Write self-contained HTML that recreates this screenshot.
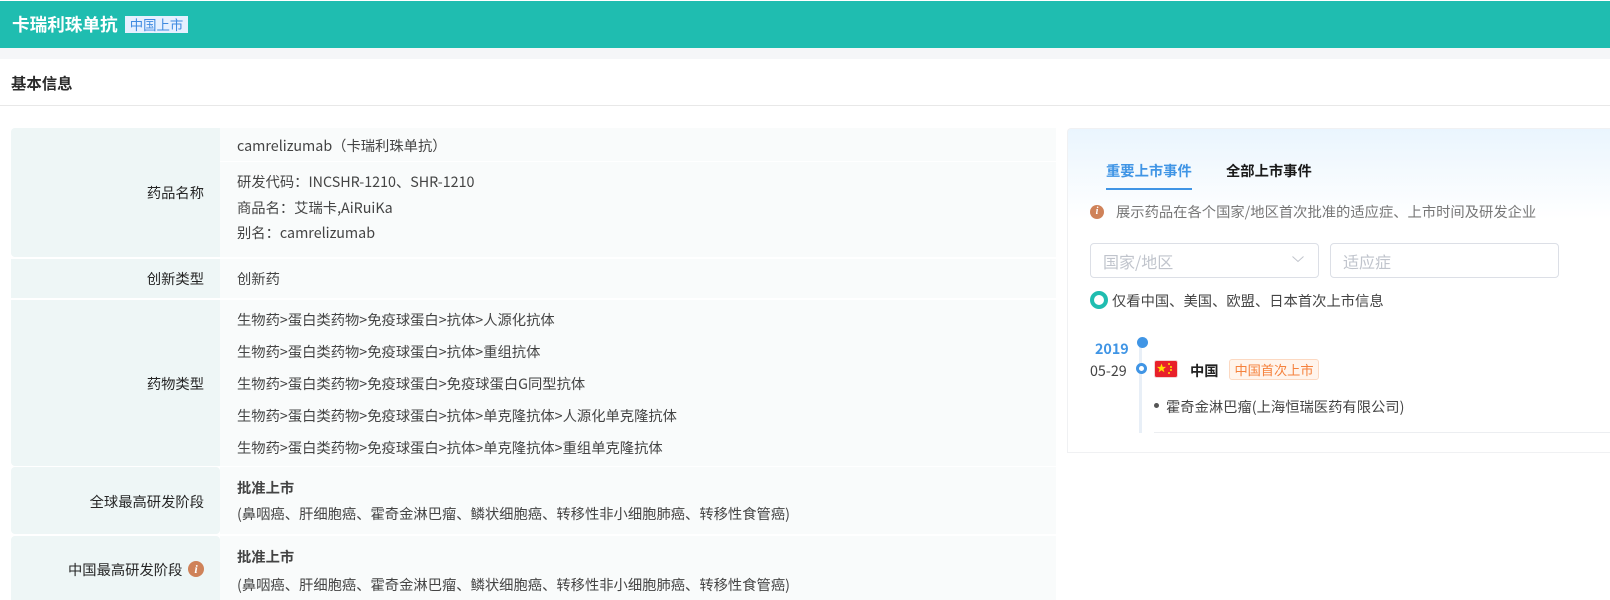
<!DOCTYPE html>
<html lang="zh"><head><meta charset="utf-8"><style>
html,body{margin:0;padding:0;background:#fff}
body{width:1610px;height:600px;overflow:hidden;position:relative;font-family:"Liberation Sans","Noto Sans CJK SC",sans-serif;font-size:14.3px;color:#444}
div{position:absolute;box-sizing:border-box}
.t{white-space:nowrap;line-height:20px;font-family:"Noto Sans CJK SC",sans-serif}
.l{background:#eef6f6;left:11px;width:209px}
.v{background:#f9fbfb;left:220px;width:836px}
.lb{right:1406px;color:#262626;text-align:right}
.x{left:237px}
</style></head><body>
<div style="left:0;top:1px;width:1610px;height:47px;background:#1fbdb0"></div>
<div style="left:0;top:48px;width:1610px;height:11px;background:#f5f6f8"></div>
<div class="t" style="left:12px;top:14px;font-size:17.6px;line-height:22px;font-weight:700;color:#fff">卡瑞利珠单抗</div>
<div class="t" style="left:125px;top:16px;width:63px;height:17px;background:#e6f0ff;color:#3f8ae0;font-size:13.4px;line-height:17px;text-align:center">中国上市</div>
<div class="t" style="left:11px;top:73px;font-size:15.4px;font-weight:700;color:#2b2b2b">基本信息</div>
<div style="left:0;top:105px;width:1610px;height:1px;background:#e8e8e8"></div>

<div class="l" style="top:128px;height:129px;border-radius:4px 0 0 4px"></div>
<div class="v" style="top:128px;height:33px"></div>
<div class="v" style="top:162px;height:95px"></div>
<div class="l" style="top:259px;height:39px"></div><div class="v" style="top:259px;height:39px"></div>
<div class="l" style="top:300px;height:166px;border-radius:0 0 0 4px"></div><div class="v" style="top:300px;height:166px"></div>
<div class="l" style="top:467px;height:67px;border-radius:4px"></div><div class="v" style="top:467px;height:67px"></div>
<div class="l" style="top:536px;height:64px;border-radius:4px 4px 0 0"></div><div class="v" style="top:536px;height:64px"></div>

<div class="t lb" style="top:183px">药品名称</div>
<div class="t x" style="top:136px">camrelizumab（卡瑞利珠单抗）</div>
<div class="t x" style="top:172px">研发代码：INCSHR-1210、SHR-1210</div>
<div class="t x" style="top:198px">商品名：艾瑞卡,AiRuiKa</div>
<div class="t x" style="top:223px">别名：camrelizumab</div>
<div class="t lb" style="top:269px">创新类型</div>
<div class="t x" style="top:269px">创新药</div>
<div class="t lb" style="top:374px">药物类型</div>
<div class="t x" style="top:310px">生物药&gt;蛋白类药物&gt;免疫球蛋白&gt;抗体&gt;人源化抗体</div>
<div class="t x" style="top:342px">生物药&gt;蛋白类药物&gt;免疫球蛋白&gt;抗体&gt;重组抗体</div>
<div class="t x" style="top:374px">生物药&gt;蛋白类药物&gt;免疫球蛋白&gt;免疫球蛋白G同型抗体</div>
<div class="t x" style="top:406px">生物药&gt;蛋白类药物&gt;免疫球蛋白&gt;抗体&gt;单克隆抗体&gt;人源化单克隆抗体</div>
<div class="t x" style="top:438px">生物药&gt;蛋白类药物&gt;免疫球蛋白&gt;抗体&gt;单克隆抗体&gt;重组单克隆抗体</div>
<div class="t lb" style="top:492px">全球最高研发阶段</div>
<div class="t x" style="top:478px;font-weight:700">批准上市</div>
<div class="t x" style="top:504px">(鼻咽癌、肝细胞癌、霍奇金淋巴瘤、鳞状细胞癌、转移性非小细胞肺癌、转移性食管癌)</div>
<div class="t" style="left:68px;top:560px;color:#262626">中国最高研发阶段</div>
<div style="left:188px;top:561px;width:16px;height:16px;border-radius:50%;background:#cf8259;color:#fff;font:italic 700 12px/16px 'Liberation Serif',serif;text-align:center">i</div>
<div class="t x" style="top:547px;font-weight:700">批准上市</div>
<div class="t x" style="top:575px">(鼻咽癌、肝细胞癌、霍奇金淋巴瘤、鳞状细胞癌、转移性非小细胞肺癌、转移性食管癌)</div>

<div style="left:1067px;top:128px;width:543px;height:325px;border:1px solid #f0f1f3;border-right:0;border-radius:4px 0 0 0;background:linear-gradient(#eaf5fe 0,#fff 90px,#fff 100%)"></div>
<div class="t" style="left:1106px;top:161px;font-weight:700;color:#4095e5">重要上市事件</div>
<div style="left:1106px;top:188px;width:86px;height:2px;background:#4095e5"></div>
<div class="t" style="left:1226px;top:161px;font-weight:700;color:#1a1a1a">全部上市事件</div>
<div style="left:1090px;top:205px;width:14px;height:14px;border-radius:50%;background:#cf8259;color:#fff;font:italic 700 10px/14px 'Liberation Serif',serif;text-align:center">i</div>
<div class="t" style="left:1116px;top:202px;color:#777">展示药品在各个国家/地区首次批准的适应症、上市时间及研发企业</div>
<div style="left:1090px;top:243px;width:229px;height:35px;border:1px solid #dcdfe6;border-radius:4px;background:#fff"></div>
<div class="t" style="left:1103px;top:251px;color:#c0c4cc;font-size:16px">国家/地区</div>
<svg style="position:absolute;left:1291px;top:255px" width="14" height="9" viewBox="0 0 14 9"><path d="M1.5 1.5 L7 6.5 L12.5 1.5" fill="none" stroke="#c0c4cc" stroke-width="1"/></svg>
<div style="left:1330px;top:243px;width:229px;height:35px;border:1px solid #dcdfe6;border-radius:4px;background:#fff"></div>
<div class="t" style="left:1343px;top:251px;color:#c0c4cc;font-size:16px">适应症</div>
<div style="left:1090px;top:291px;width:18px;height:18px;border:4px solid #1fbdb0;border-radius:50%;background:#fff"></div>
<div class="t" style="left:1112px;top:291px;color:#444">仅看中国、美国、欧盟、日本首次上市信息</div>

<div style="left:1139px;top:342px;width:3px;height:91px;background:#e8eff7"></div>
<div style="left:1137px;top:337px;width:11px;height:11px;border-radius:50%;background:#4095e5"></div>
<div style="left:1136px;top:363px;width:11px;height:11px;border-radius:50%;background:#fff;border:3px solid #4095e5"></div>
<div class="t" style="left:1095px;top:339px;font-weight:700;color:#4095e5">2019</div>
<div class="t" style="left:1090px;top:361px;color:#444">05-29</div>
<svg style="position:absolute;left:1154px;top:360px" width="24" height="18" viewBox="0 0 24 18"><rect x=".5" y=".5" width="23" height="17" rx="2" fill="#e8202a" stroke="#f1d5d5"/><polygon points="7.5,3.5 8.7,6.9 12.1,6.9 9.4,9 10.4,12.3 7.5,10.3 4.6,12.3 5.6,9 2.9,6.9 6.3,6.9" fill="#ffe000"/><g fill="#ffe000"><circle cx="15" cy="4" r="1"/><circle cx="17" cy="7" r="1"/><circle cx="17" cy="10" r="1"/><circle cx="15" cy="13" r="1"/></g></svg>
<div class="t" style="left:1190px;top:361px;font-weight:700;color:#222">中国</div>
<div class="t" style="left:1229px;top:359px;width:90px;height:21px;background:#fff4ec;border:1px solid #fcd9c2;border-radius:3px;color:#f5813c;font-size:13.2px;line-height:19px;text-align:center">中国首次上市</div>
<div style="left:1154px;top:403px;width:5px;height:5px;border-radius:50%;background:#555"></div>
<div class="t" style="left:1166px;top:397px">霍奇金淋巴瘤(上海恒瑞医药有限公司)</div>
<div style="left:1154px;top:432px;width:456px;height:1px;background:#eceef1"></div>
</body></html>
